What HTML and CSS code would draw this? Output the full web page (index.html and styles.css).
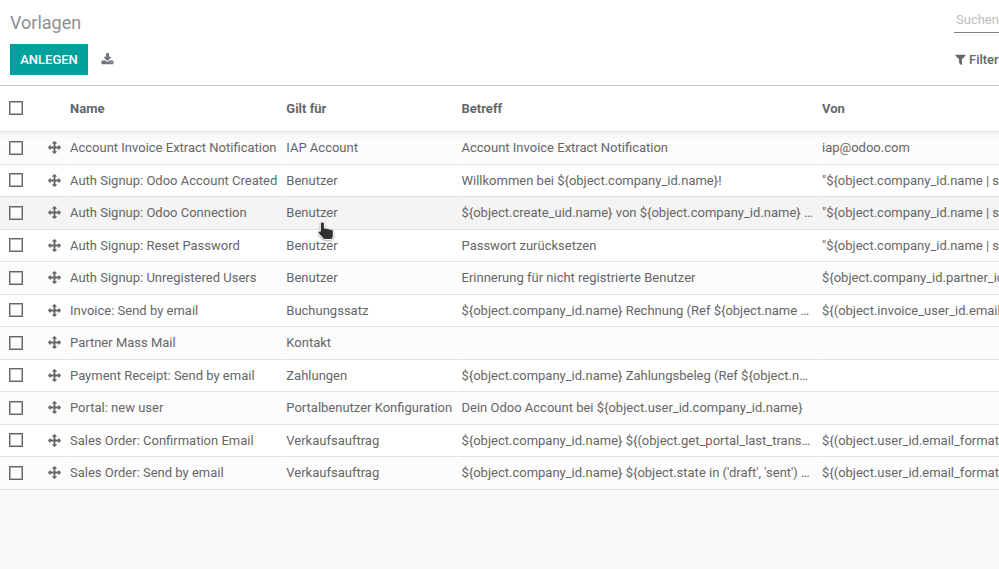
FILE: index.html
```html
<!DOCTYPE html>
<html lang="de">
<head>
<meta charset="utf-8">
<title>Vorlagen</title>
<link rel="stylesheet" href="styles.css">
</head>
<body>
<svg class="defs" aria-hidden="true">
<symbol id="move" viewBox="0 0 1792 1792"><path d="M1792 896q0 26-19 45l-256 256q-19 19-45 19t-45-19-19-45v-128h-384v384h128q26 0 45 19t19 45-19 45l-256 256q-19 19-45 19t-45-19l-256-256q-19-19-19-45t19-45 45-19h128v-384h-384v128q0 26-19 45t-45 19-45-19l-256-256q-19-19-19-45t19-45l256-256q19-19 45-19t45 19 19 45v128h384v-384h-128q-26 0-45-19t-19-45 19-45l256-256q19-19 45-19t45 19l256 256q19 19 19 45t-19 45-45 19h-128v384h384v-128q0-26 19-45t45-19 45 19l256 256q19 19 19 45z"/></symbol>
</svg>
<header class="panel">
  <div class="panel-row top">
    <h1>Vorlagen</h1>
    <div class="search">Suchen</div>
  </div>
  <div class="panel-row actions">
    <button class="create">ANLEGEN</button>
    <svg class="download" viewBox="0 0 1792 1792"><path d="M1344 1344q0-26-19-45t-45-19-45 19-19 45 19 45 45 19 45-19 19-45zm256 0q0-26-19-45t-45-19-45 19-19 45 19 45 45 19 45-19 19-45zm128-224v320q0 40-28 68t-68 28h-1472q-40 0-68-28t-28-68v-320q0-40 28-68t68-28h465l135 136q58 56 136 56t136-56l136-136h464q40 0 68 28t28 68zm-325-569q17 41-14 70l-448 448q-18 19-45 19t-45-19l-448-448q-31-29-14-70 17-39 59-39h256v-448q0-26 19-45t45-19h256q26 0 45 19t19 45v448h256q42 0 59 39z"/></svg>
    <div class="filter"><svg viewBox="0 0 1792 1792"><path d="M1595 295q17 41-14 70l-493 493v742q0 42-39 59-13 5-25 5-27 0-45-19l-256-256q-19-19-19-45v-486l-493-493q-31-29-14-70 17-39 59-39h1280q42 0 59 39z"/></svg><span>Filter</span></div>
  </div>
</header>
<main class="list">
  <div class="row head"><div class="tools"><i class="box"></i></div><div>Name</div><div>Gilt für</div><div>Betreff</div><div>Von</div></div>
  <div class="row"><div class="tools"><i class="box"></i><svg><use href="#move"/></svg></div><div>Account Invoice Extract Notification</div><div>IAP Account</div><div>Account Invoice Extract Notification</div><div>iap@odoo.com</div></div>
  <div class="row"><div class="tools"><i class="box"></i><svg><use href="#move"/></svg></div><div>Auth Signup: Odoo Account Created</div><div>Benutzer</div><div>Willkommen bei ${object.company_id.name}!</div><div>"${object.company_id.name | s</div></div>
  <div class="row hover"><div class="tools"><i class="box"></i><svg><use href="#move"/></svg></div><div>Auth Signup: Odoo Connection</div><div>Benutzer</div><div>${object.create_uid.name} von ${object.company_id.name} …</div><div>"${object.company_id.name | s</div></div>
  <div class="row"><div class="tools"><i class="box"></i><svg><use href="#move"/></svg></div><div>Auth Signup: Reset Password</div><div>Benutzer</div><div>Passwort zurücksetzen</div><div>"${object.company_id.name | s</div></div>
  <div class="row"><div class="tools"><i class="box"></i><svg><use href="#move"/></svg></div><div>Auth Signup: Unregistered Users</div><div>Benutzer</div><div>Erinnerung für nicht registrierte Benutzer</div><div>${object.company_id.partner_id</div></div>
  <div class="row"><div class="tools"><i class="box"></i><svg><use href="#move"/></svg></div><div>Invoice: Send by email</div><div>Buchungssatz</div><div>${object.company_id.name} Rechnung (Ref ${object.name …</div><div>${(object.invoice_user_id.email</div></div>
  <div class="row"><div class="tools"><i class="box"></i><svg><use href="#move"/></svg></div><div>Partner Mass Mail</div><div>Kontakt</div><div></div><div></div></div>
  <div class="row"><div class="tools"><i class="box"></i><svg><use href="#move"/></svg></div><div>Payment Receipt: Send by email</div><div>Zahlungen</div><div>${object.company_id.name} Zahlungsbeleg (Ref ${object.n…</div><div></div></div>
  <div class="row"><div class="tools"><i class="box"></i><svg><use href="#move"/></svg></div><div>Portal: new user</div><div>Portalbenutzer Konfiguration</div><div>Dein Odoo Account bei ${object.user_id.company_id.name}</div><div></div></div>
  <div class="row"><div class="tools"><i class="box"></i><svg><use href="#move"/></svg></div><div>Sales Order: Confirmation Email</div><div>Verkaufsauftrag</div><div>${object.company_id.name} ${(object.get_portal_last_trans…</div><div>${(object.user_id.email_format</div></div>
  <div class="row last"><div class="tools"><i class="box"></i><svg><use href="#move"/></svg></div><div>Sales Order: Send by email</div><div>Verkaufsauftrag</div><div>${object.company_id.name} ${object.state in ('draft', 'sent') …</div><div>${(object.user_id.email_format</div></div>
</main>
<svg class="cursor" viewBox="0 0 18 20"><path d="M5.3 1c1.3 0 2.1.8 2.1 2v4.2c.9-.4 2-.2 2.5.5.9-.4 2-.2 2.5.6 1.9-.6 3.9.2 3.9 2.1v4.2c0 2.4-1.2 3.9-3.2 3.9H8.5c-1.4 0-2.2-.6-3-1.6l-4-4.6c-1-1.4.4-2.8 1.8-2V3c0-1.2.8-2 2-2z"/></svg>
</body>
</html>
```
FILE: styles.css
```css
* { box-sizing: border-box; }
body {
  margin: 0;
  height: 569px;
  overflow: hidden;
  background: #f9f9f9;
  color: #666;
  font: 13px/20px Roboto, sans-serif;
}
svg { display: block; fill: currentColor; }
.defs { display: none; }
.panel { height: 86px; background: #fff; border-bottom: 1px solid #c8c8c8; }
.panel-row { display: flex; padding-left: 10px; overflow: hidden; }
.top { height: 44px; }
h1 { margin: 9px 0 0; font-size: 18px; line-height: 28px; font-weight: 400; color: #8f8f8f; }
.search {
  width: 45px;
  height: 33px;
  margin-left: auto;
  padding: 10px 0 0 2px;
  border-bottom: 1px solid #808080;
  color: #bdbdbd;
}
.actions { height: 31px; align-items: center; }
.create {
  width: 78px;
  height: 31px;
  padding: 0;
  border: 0;
  background: #00a09d;
  color: #fff;
  font: 500 13px/31px Roboto, sans-serif;
}
.download { width: 13px; height: 13px; margin: -1px 0 0 12.5px; color: #6c757d; }
.filter { display: flex; align-items: center; width: 45px; margin-left: auto; font-weight: 500; }
.filter svg { flex: none; width: 13px; height: 13px; }
.filter span { margin-left: 2px; }

.list { background: #fff; }
.row {
  display: grid;
  grid-template-columns: 65px 215px 174px 360px 181px;
  column-gap: 1px;
  height: 32px;
  line-height: 31px;
  white-space: nowrap;
}
.row > div { padding-left: 4px; border-bottom: 1px solid #dee2e6; overflow: hidden; }
.row > div:nth-child(3) { padding-left: 4.3px; }
.row > div:nth-child(4) { padding-left: 4.5px; }
.row:nth-child(even) { height: 33px; background: #fcfcfc; }
.row.hover { background: #f4f4f4; }
.row.last { border-bottom: 1px solid #dee2e6; }
.row.last > div { border-bottom: 0; }
.row.head { height: 46px; line-height: 45px; background: #fff; font-weight: 700; }
.row.head + .row { background: linear-gradient(#f1f1f1, #fafafa 6px, #fcfcfc 12px); }
.row > .tools { display: flex; align-items: flex-start; padding-left: 9px; }
.tools svg { width: 13px; height: 13px; margin: 9px 0 0 25px; }
.box {
  width: 14px;
  height: 14px;
  margin-top: 8px;
  border: 1px solid #666;
  box-shadow: inset 0 0 0 1px #adb5bd;
  background: #fff;
}
.row:nth-child(even) .box { margin-top: 9px; }
.head .box { margin-top: 15px; }
.cursor {
  position: absolute;
  left: 317px;
  top: 221px;
  width: 18px;
  height: 20px;
  fill: #303030;
  stroke: #fff;
  stroke-width: 1;
  filter: drop-shadow(0 1px 1px #0005);
}
```
